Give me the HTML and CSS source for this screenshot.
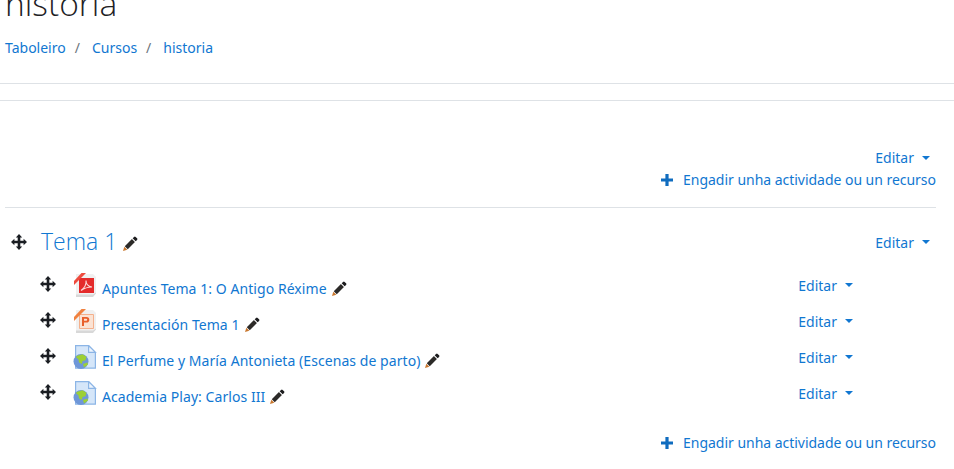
FILE: index.html
```html
<!DOCTYPE html>
<html lang="gl">
<head>
<meta charset="utf-8">
<title>historia</title>
<link rel="stylesheet" href="styles.css">
</head>
<body>
<svg class="defs" width="0" height="0" aria-hidden="true">
  <defs>
    <symbol id="move" viewBox="0 0 16 16">
      <path fill="#1a1d22" d="M8 0l3.200 3.400H9.300v3.300h3.300V4.800L16 8l-3.400 3.200V9.300H9.300v3.300h1.900L8 16l-3.200-3.400h1.900V9.300H3.400v1.900L0 8l3.400-3.200v1.900h3.300V3.400H4.800z"/>
    </symbol>
    <symbol id="pencil" viewBox="0 0 16 16">
      <path fill="#1c1c1e" d="M11.800 1a1.200 1.200 0 0 1 1.700 0l1.500 1.500a1.200 1.200 0 0 1 0 1.700l-1.500 1.500-3.200-3.200z"/>
      <path fill="#2c2a28" d="M9.500 3.300l3.200 3.200-7.600 7.600-3.200-3.200z"/>
      <path fill="#c9772e" d="M1.400 11.400l3.200 3.200L0 16z"/>
    </symbol>
    <symbol id="plus" viewBox="0 0 12 12">
      <path fill="#0f6cbf" d="M4.400 0h3.200v4.400H12v3.200H7.600V12H4.400V7.600H0V4.400h4.400z"/>
    </symbol>
    <symbol id="globe" viewBox="0 0 24 24">
      <path fill="#d5e6f9" stroke="#8cb5e6" stroke-width="1.200" d="M2.600.6h13l6.800 6.800v15.800H2.600z"/>
      <path fill="#eef5fd" stroke="#8cb5e6" stroke-width="1.200" d="M15.600.6v6.800h6.800z"/>
      <circle cx="8" cy="16.500" r="7.500" fill="#6f97d8"/>
      <path fill="#9ccf35" d="M3.500 11l6-1.800 4 2.500-1 3.500-3 .8-.6 3-2.800-1.600-.8-3.400-2-1.200zM10 19l4.400-1.600.6 2.200-4 3z"/>
    </symbol>
    <symbol id="pdf" viewBox="0 0 24 24">
      <path fill="#f0f0f0" d="M3 1h17l3 3v16l-3 3H3z"/>
      <path fill="#d8d8d8" d="M3 21.500h17l3-2v1l-3 3.500H3z"/>
      <path fill="#e42b2b" d="M6 5h15v15H6z"/>
      <path fill="none" stroke="#fbd7d7" stroke-width="1.100" d="M8 17.500c3.500-2.500 5.500-6 5-10 0 3.500 2.500 6 6 6.500-4 0-7.500 1-11 3.500z"/>
      <path fill="#ee4b3e" d="M1 8L8.500 0H13L1 12z"/>
    </symbol>
    <symbol id="ppt" viewBox="0 0 24 24">
      <path fill="#f0f0f0" d="M3 1h17l3 3v16l-3 3H3z"/>
      <path fill="#d8d8d8" d="M3 21.500h17l3-2v1l-3 3.500H3z"/>
      <path fill="#fbe3d4" stroke="#f4b08c" d="M6.500 5.500h14v14h-14z"/>
      <path fill="#e8602c" d="M9 8h4.500a2.800 2.800 0 0 1 0 5.600h-2.500v3.400H9zM11 9.800v2h2.200a1 1 0 0 0 0-2z"/>
      <path fill="#f0813f" d="M1 8L8.500 0H13L1 12z"/>
    </symbol>
  </defs>
</svg>

<header class="page-header">
  <h1 class="page-title">historia</h1>
  <nav class="breadcrumb">
    <a href="#">Taboleiro</a><span class="sep">/</span>
    <a href="#">Cursos</a><span class="sep">/</span>
    <a href="#">historia</a>
  </nav>
</header>
<div class="rule-band"></div>

<main class="course">
  <section class="section-zero">
    <a class="edit-link" href="#">Editar<span class="caret"></span></a>
    <a class="add-link" href="#"><svg class="plus"><use href="#plus"/></svg>Engadir unha actividade ou un recurso</a>
  </section>

  <section class="topic">
    <div class="topic-head">
      <svg class="move"><use href="#move"/></svg>
      <h2 class="topic-title"><a href="#">Tema 1</a></h2>
      <svg class="pencil pencil-lg"><use href="#pencil"/></svg>
      <a class="edit-link push" href="#">Editar<span class="caret"></span></a>
    </div>

    <ul class="activities">
      <li class="activity">
        <svg class="move"><use href="#move"/></svg>
        <svg class="file-icon"><use href="#pdf"/></svg>
        <a class="activity-name" href="#">Apuntes Tema 1: O Antigo Réxime</a>
        <svg class="pencil"><use href="#pencil"/></svg>
        <a class="edit-link push" href="#">Editar<span class="caret"></span></a>
      </li>
      <li class="activity">
        <svg class="move"><use href="#move"/></svg>
        <svg class="file-icon"><use href="#ppt"/></svg>
        <a class="activity-name" href="#">Presentación Tema 1</a>
        <svg class="pencil"><use href="#pencil"/></svg>
        <a class="edit-link push" href="#">Editar<span class="caret"></span></a>
      </li>
      <li class="activity">
        <svg class="move"><use href="#move"/></svg>
        <svg class="file-icon"><use href="#globe"/></svg>
        <a class="activity-name" href="#">El Perfume y María Antonieta (Escenas de parto)</a>
        <svg class="pencil"><use href="#pencil"/></svg>
        <a class="edit-link push" href="#">Editar<span class="caret"></span></a>
      </li>
      <li class="activity">
        <svg class="move"><use href="#move"/></svg>
        <svg class="file-icon"><use href="#globe"/></svg>
        <a class="activity-name" href="#">Academia Play: Carlos III</a>
        <svg class="pencil"><use href="#pencil"/></svg>
        <a class="edit-link push" href="#">Editar<span class="caret"></span></a>
      </li>
    </ul>

    <div class="topic-foot">
      <a class="add-link" href="#"><svg class="plus"><use href="#plus"/></svg>Engadir unha actividade ou un recurso</a>
    </div>
  </section>
</main>
</body>
</html>
```

FILE: styles.css
```css
* { box-sizing: border-box; }
html, body { height: 469px; overflow: hidden; }
body {
  margin: 0;
  background: #fff;
  color: #1d2125;
  font-family: "Noto Sans", "Open Sans", sans-serif;
  font-size: 14px;
  line-height: 21px;
}
a { color: #1177d1; text-decoration: none; }
.defs { position: absolute; }

.page-header {
  display: flow-root;
  height: 84px;
  padding-left: 5px;
  border-bottom: 1px solid #dee2e6;
}
.page-title {
  margin: -18px 0 0;
  font-family: "Open Sans", sans-serif;
  font-weight: 300;
  font-size: 33.5px;
  line-height: 42px;
  color: #1d2125;
}
.breadcrumb { margin-top: 13px; display: flex; }
.sep { color: #6c757d; margin: 0 12px 0 9px; }

.rule-band { height: 17px; border-bottom: 1px solid #dee2e6; }

.course { margin-left: 5px; width: 931px; }

.section-zero {
  display: flex;
  flex-direction: column;
  align-items: flex-end;
  height: 107px;
  padding-top: 46px;
  border-bottom: 1px solid #dee2e6;
}
.edit-link { display: inline-flex; align-items: center; }
.section-zero .edit-link { margin-bottom: 1px; padding-right: 6px; }
.caret {
  width: 0;
  height: 0;
  margin-left: 8px;
  border-top: 4px solid #1177d1;
  border-left: 4px solid transparent;
  border-right: 4px solid transparent;
}
.add-link { display: inline-flex; align-items: center; letter-spacing: -0.03px; }
.plus { width: 12px; height: 12px; margin-right: 10px; }

.move { width: 16px; height: 16px; flex: none; }
.pencil { width: 15px; height: 15px; flex: none; margin-left: 5px; margin-top: 6px; }
.pencil-lg { margin-left: 6px; margin-top: 3px; }
.push { margin-left: auto; }

.topic-head {
  display: flex;
  align-items: center;
  height: 36px;
  margin-top: 16px;
  padding-left: 6px;
  padding-right: 6px;
}
.topic-title {
  margin: -2px 0 0 14px;
  font-family: "Open Sans", sans-serif;
  font-weight: 300;
  font-size: 23px;
  line-height: 30px;
}

.activities { list-style: none; margin: 7px 0 0; padding: 0; }
.activity {
  display: flex;
  align-items: center;
  height: 36px;
  padding-left: 35px;
  padding-right: 83px;
}
.activity .move { margin-bottom: 2px; }
.file-icon { width: 24px; height: 24px; flex: none; margin-left: 17px; margin-right: 5px; }
.activity-name { margin-top: 6px; letter-spacing: 0.06px; }

.topic-foot { display: flex; justify-content: flex-end; margin-top: 21px; }
```
